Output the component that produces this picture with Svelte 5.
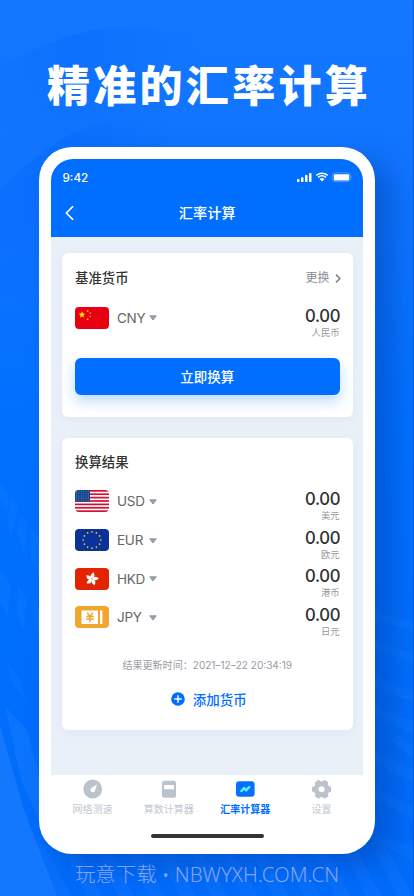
<script>
  const results = [
    { code: 'USD', name: '美元', flag: 'us' },
    { code: 'EUR', name: '欧元', flag: 'eu' },
    { code: 'HKD', name: '港币', flag: 'hk' },
    { code: 'JPY', name: '日元', flag: 'jp' },
  ];
  const tabs = [
    { label: '网络测速', icon: 'speed' },
    { label: '算数计算器', icon: 'calc' },
    { label: '汇率计算器', icon: 'rate', active: true },
    { label: '设置', icon: 'gear' },
  ];
  const euStars = Array.from({ length: 12 }, (_, i) => ({
    x: 17 + 8.8 * Math.sin((i * Math.PI) / 6),
    y: 11 - 8.2 * Math.cos((i * Math.PI) / 6),
  }));
  const ribs = Array.from({ length: 13 }, (_, i) => i);
</script>

{#snippet flag(kind)}
  <svg class="flag" viewBox="0 0 34 22">
    {#if kind === 'cn'}
      <rect width="34" height="22" fill="#e60012" />
      <path d="M7 4.200L7.880 6.590L10.420 6.690L8.430 8.260L9.120 10.710L7 9.300L4.880 10.710L5.570 8.260L3.580 6.690L6.120 6.590Z" fill="#ffe600" />
      <circle cx="12.600" cy="4" r=".9" fill="#f9c500" />
      <circle cx="15.200" cy="6" r=".8" fill="#f9c500" />
      <circle cx="15.200" cy="9.500" r=".8" fill="#f9c500" />
      <circle cx="12.600" cy="12.200" r=".9" fill="#f9c500" />
    {:else if kind === 'us'}
      <rect width="34" height="22" fill="#fff" />
      {#each [0, 1, 2, 3, 4, 5, 6] as i}
        <rect y={i * 3.385} width="34" height="1.69" fill="#d80d36" />
      {/each}
      <rect width="15" height="11.8" fill="#17478c" />
      {#each [0, 1, 2, 3, 4] as r}
        {#each [0, 1, 2, 3, 4, 5] as c}
          <circle cx={1.5 + c * 2.4} cy={1.7 + r * 2.1} r=".42" fill="#9db6d3" />
        {/each}
      {/each}
    {:else if kind === 'eu'}
      <rect width="34" height="22" fill="#0b3299" />
      {#each euStars as s}
        <circle cx={s.x} cy={s.y} r=".85" fill="#d8cf39" />
      {/each}
    {:else if kind === 'hk'}
      <rect width="34" height="22" fill="#e22400" />
      {#each [0, 72, 144, 216, 288] as a}
        <g transform="rotate({a + 12} 17 11)">
          <path d="M17 11C14.400 9.200 14.200 5.600 17.800 4.200C17.400 5.700 19.300 6.300 18.600 8.400C18.300 9.500 17.600 10.200 17 11Z" fill="#fff" />
        </g>
      {/each}
      <circle cx="17" cy="11" r=".6" fill="#e22400" />
    {:else}
      <rect width="34" height="22" fill="#f3a62d" />
      <rect x="6.500" y="4.500" width="16.500" height="13.500" fill="#fff" />
      <rect x="25" y="4.500" width="2.400" height="13.500" fill="#fff" />
      <path d="M12.100 6.700L15 10.200L17.900 6.700M11.200 10.500H18.800M11.200 13H18.800M15 10V16.200" fill="none" stroke="#f3a62d" stroke-width="1.500" />
    {/if}
  </svg>
{/snippet}

{#snippet currency(code, name, kind)}
  <div class="currency">
    {@render flag(kind)}
    <span class="code">{code}</span>
    <svg class="caret" viewBox="0 0 8 6"><path d="M.7.8h6.600L4 5.100z" fill="#989baa" stroke="#989baa" stroke-linejoin="round" /></svg>
    <div class="amount"><b>0.00</b><small>{name}</small></div>
  </div>
{/snippet}

<div class="poster">
  <svg class="backdrop" viewBox="0 0 414 896">
    <defs>
      <linearGradient id="base" x1="0" y1="0" x2="0" y2="1">
        <stop offset="0" stop-color="#1477ff" />
        <stop offset=".25" stop-color="#0e73ff" />
        <stop offset=".5" stop-color="#0070ff" />
        <stop offset="1" stop-color="#006bfa" />
      </linearGradient>
      <radialGradient id="outer" gradientUnits="userSpaceOnUse" cx="80" cy="40" r="120">
        <stop offset="0" stop-color="#0568fa" stop-opacity=".4" />
        <stop offset="1" stop-color="#0568fa" stop-opacity="0" />
      </radialGradient>
      <radialGradient id="inner" gradientUnits="userSpaceOnUse" cx="50" cy="180" r="140">
        <stop offset="0" stop-color="#0568fa" stop-opacity=".5" />
        <stop offset="1" stop-color="#0568fa" stop-opacity="0" />
      </radialGradient>
    </defs>
    <rect width="414" height="896" fill="url(#base)" />
    <path d="M0 67Q70 28 118 28Q180 29 250 48V200H0Z" fill="url(#outer)" />
    <path d="M0 190Q65 121 125 121Q165 123 210 140V430H0Z" fill="url(#inner)" />
    <g fill="#2484ff" opacity=".18">
      <path d="M0 482l8 12v20l-8-15zM11 495l7 13-7 32-4-20zM20 513l7 10-2 30-8-20zM31 526l8 14v38l-8-18zM0 568l11 17-3 32-8-15zM18 584l9 17-3 32-8-22zM34 600l5 10v30l-5-12zM5 660l14 17 8 25-14-17z" />
    </g>
    <path d="M0 725L24 810L57 896H0Z" fill="#2583ff" opacity=".5" />
    <path d="M5 706L27 730L39 773V820L21 780Z" fill="#2583ff" opacity=".3" />
    <g fill="#2383ff" opacity=".2">
      {#each ribs as i}
        <path d="M{30 + i * 31} 842l14 4l28 50h-16z" />
      {/each}
      <path d="M374 611l40 11v9l-40-12zM374 640l40 14v9l-40-15zM374 676l40 16v11l-40-17zM374 705l40 17v13l-40-20zM389 739l10-4 15 12v12zM374 751l40 19v14l-40-22zM374 788l40 20v12l-40-22zM370 829l44 20v12l-46-22z" />
    </g>
    <rect x="413" width="1" height="896" fill="#0757c4" opacity=".7" />
  </svg>

  <h1>精准的汇率计算</h1>

  <main class="phone">
    <header>
      <div class="status">
        <span>9:42</span>
        <svg viewBox="0 0 56 12" width="56" height="12">
          <g fill="#fff">
            <rect x="0" y="7" width="2.500" height="3" rx=".8" />
            <rect x="4" y="5.200" width="2.500" height="4.800" rx=".8" />
            <rect x="8" y="3" width="2.500" height="7" rx=".8" />
            <rect x="12" y="1" width="2.500" height="9" rx=".8" />
            <path d="M22.500 6.900Q25 5 27.500 6.900L25 9.500Z" />
          </g>
          <path d="M19.200 3.400Q25-1.100 30.800 3.400M21 5.400Q25 2.200 29 5.400" fill="none" stroke="#fff" stroke-width="1.500" />
          <rect x="35.400" y=".9" width="18" height="8.800" rx="2.300" fill="none" stroke="#5c9fff" stroke-width=".8" />
          <rect x="36.800" y="2.200" width="15.400" height="6.200" rx="1" fill="#fff" />
          <path d="M54.500 3.800Q56 5.200 54.500 6.700z" fill="#5c9fff" />
        </svg>
      </div>
      <div class="nav">
        <svg viewBox="0 0 9 14" width="9" height="14"><path d="M7.700.6L1.300 7l6.400 6.400" fill="none" stroke="#fff" stroke-width="1.600" stroke-linecap="round" stroke-linejoin="round" /></svg>
        <h2>汇率计算</h2>
      </div>
    </header>

    <div class="content">
      <section class="card base">
        <div class="heading">
          <h3>基准货币</h3>
          <span class="change">更换
            <svg viewBox="0 0 6 9" width="6" height="9"><path d="M1 .6l3.900 3.900L1 8.400" fill="none" stroke="#858793" stroke-width="1.700" /></svg>
          </span>
        </div>
        {@render currency('CNY', '人民币', 'cn')}
        <button class="convert">立即换算</button>
      </section>

      <section class="card results">
        <h3>换算结果</h3>
        <div class="list">
          {#each results as r}
            {@render currency(r.code, r.name, r.flag)}
          {/each}
        </div>
        <p class="updated"><span>结果更新时间：</span><span>2021–12–22 20:34:19</span></p>
        <button class="add">
          <svg viewBox="0 0 14 14" width="14" height="14"><circle cx="7" cy="7" r="6.800" fill="#006eff" /><path d="M7 3.800v6.400M3.800 7h6.400" stroke="#fff" stroke-width="1.400" stroke-linecap="round" /></svg>
          添加货币
        </button>
      </section>
    </div>

    <nav class="tabs">
      {#each tabs as t}
        <div class="tab" class:active={t.active}>
          <svg viewBox="0 0 20 20" width="20" height="20">
            {#if t.icon === 'speed'}
              <circle cx="9.700" cy="10" r="9.400" fill="#bac2ce" />
              <path d="M14 5.600L12 12A2.400 2.400 0 1 1 8.300 9.100Z" fill="#fff" />
            {:else if t.icon === 'calc'}
              <rect x="3" y="1.700" width="14" height="17" rx="2.500" fill="#bac2ce" />
              <rect x="5" y="6" width="10" height="4.200" rx=".5" fill="#fff" />
            {:else if t.icon === 'rate'}
              <rect x="1" y="2.300" width="18.600" height="15.500" rx="3.200" fill="#0870ff" />
              <path d="M6.400 12L9.200 9.100L11.200 11.300L14.300 8" fill="none" stroke="#53f2ff" stroke-width="2.500" stroke-linecap="round" stroke-linejoin="round" />
            {:else}
              <g transform="translate(.6 0)">
                <circle cx="10" cy="10.300" r="5.500" fill="none" stroke="#bac2ce" stroke-width="5" />
                {#each [30, 90, 150, 210, 270, 330] as a}
                  <rect x="7.200" y=".7" width="5.600" height="4.500" rx="1.500" fill="#bac2ce" transform="rotate({a} 10 10.300)" />
                {/each}
              </g>
            {/if}
          </svg>
          <span>{t.label}</span>
        </div>
      {/each}
    </nav>
    <div class="home"></div>
  </main>

  <footer>玩意下载 • NBWYXH.COM.CN</footer>
</div>

<style>
  :global(body) { margin: 0; }
  .poster {
    position: relative;
    width: 414px;
    height: 896px;
    overflow: hidden;
    display: flex;
    flex-direction: column;
    align-items: center;
    font-family: Inter, "Noto Sans CJK SC", sans-serif;
    box-sizing: border-box;
  }
  .backdrop { position: absolute; inset: 0; width: 414px; height: 896px; }
  h1, h2, h3, p { margin: 0; }
  h1 {
    position: relative;
    margin-top: 54px;
    height: 93px;
    line-height: 64px;
    font-size: 43px;
    font-weight: 900;
    letter-spacing: 3.3px;
    padding-left: 4px;
    color: #fff;
    white-space: nowrap;
  }
  .phone {
    position: relative;
    width: 336px;
    height: 707px;
    flex: none;
    box-sizing: border-box;
    padding: 12px 12px 0;
    border-radius: 33px;
    background: #fff;
    box-shadow: 18px 12px 26px rgba(0, 56, 155, .38);
    display: flex;
    flex-direction: column;
  }
  header {
    height: 77.500px;
    flex: none;
    border-radius: 22px 22px 0 0;
    background: #006eff;
    color: #fff;
  }
  .status {
    display: flex;
    justify-content: space-between;
    padding: 11px 10px 0 11.500px;
    height: 16px;
    font-size: 11.700px;
    line-height: 16px;
    font-weight: 500;
  }
  .status svg { margin-top: 2px; }
  .nav { display: flex; align-items: center; padding: 15px 14px 0; height: 24px; }
  h2 { flex: 1; margin-right: 8.500px; text-align: center; font-size: 14.200px; line-height: 24px; font-weight: 500; }
  .content {
    height: 538.500px;
    flex: none;
    box-sizing: border-box;
    padding: 16.500px 10.500px 0 11px;
    background: #eaf0f8;
    display: flex;
    flex-direction: column;
    gap: 21px;
  }
  .card {
    box-sizing: border-box;
    border-radius: 6px;
    background: #fff;
    padding: 0 13px;
    box-shadow: 0 2px 10px rgba(80, 105, 145, .06);
  }
  .base { height: 163.500px; padding-top: 15px; }
  .results { height: 292.500px; padding-top: 14.500px; }
  .heading { display: flex; justify-content: space-between; }
  h3 { font-size: 13.400px; font-weight: 500; line-height: 20px; height: 20px; color: #333; }
  .change { display: flex; align-items: center; gap: 5px; font-size: 12px; line-height: 20px; color: #8b8c98; margin-right: -1px; }
  .currency { display: flex; align-items: center; height: 38.700px; }
  .base .currency { margin-top: 10.500px; }
  .list { margin-top: 10px; }
  .flag { width: 34px; height: 22px; border-radius: 4px; overflow: hidden; flex: none; }
  .code { width: 32px; margin-left: 8px; font-size: 13.500px; line-height: 22px; color: #666; letter-spacing: -.25px; }
  .caret { width: 8px; height: 6px; margin-top: 1px; }
  .amount { margin-left: auto; display: flex; flex-direction: column; align-items: flex-end; padding-top: 8.500px; }
  .amount b { font-size: 16.700px; line-height: 20px; font-weight: 500; color: #303030; letter-spacing: -.3px; margin-right: -.8px; }
  .amount small { font-size: 9.300px; line-height: 13px; color: #999; }
  button { border: 0; font-family: inherit; padding: 0; }
  .convert {
    display: block;
    width: 100%;
    height: 37px;
    margin-top: 20.500px;
    border-radius: 6px;
    background: #006eff;
    box-shadow: 0 6px 14px rgba(0, 120, 255, .28);
    color: #fff;
    font-size: 13.500px;
    font-weight: 500;
  }
  .updated { display: flex; justify-content: center; margin-top: 20px; font-size: 10.050px; line-height: 17px; color: #9a9ba5; white-space: nowrap; }
  .add {
    display: flex;
    align-items: center;
    justify-content: center;
    gap: 8px;
    width: 100%;
    height: 22px;
    margin-top: 14.500px;
    padding-left: 3px;
    background: none;
    color: #006eff;
    font-size: 13.500px;
    font-weight: 500;
  }
  .tabs { display: flex; justify-content: space-between; margin: 4px 3.500px 0; }
  .tab { width: 76px; display: flex; flex-direction: column; align-items: center; font-size: 10px; line-height: 15px; color: #c2c8d2; white-space: nowrap; }
  .tab span { margin-top: 2.500px; }
  .active { color: #006eff; font-weight: 700; }
  .home { width: 113px; height: 4px; margin: 17.500px auto 0; border-radius: 2px; background: #363334; }
  footer {
    position: relative;
    margin-top: 4px;
    font-family: "Noto Sans", "Noto Sans CJK SC", sans-serif;
    font-size: 20.400px;
    line-height: 32px;
    font-weight: 300;
    color: #86a3f3;
    white-space: nowrap;
  }
</style>
